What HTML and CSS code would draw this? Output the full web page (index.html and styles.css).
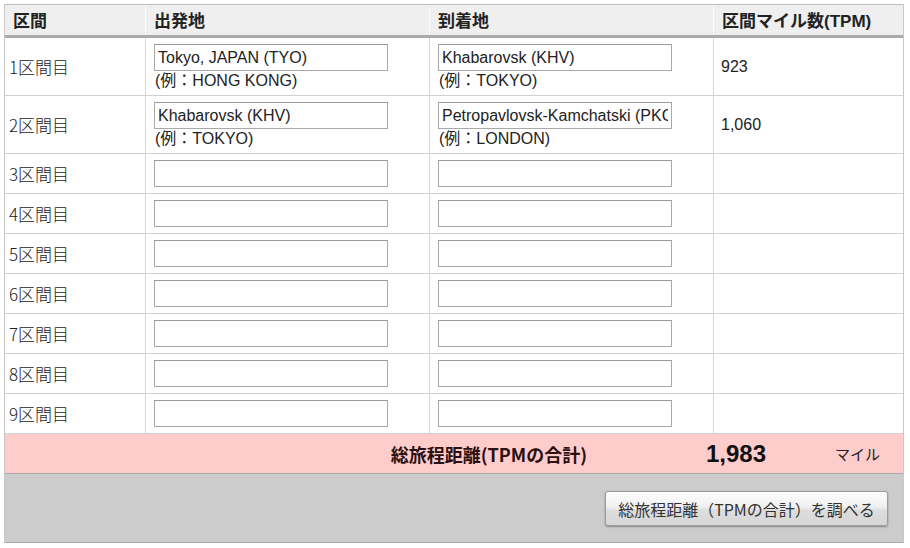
FILE: index.html
```html
<!DOCTYPE html>
<html lang="ja">
<head>
<meta charset="utf-8">
<title>総旅程距離</title>
<link rel="stylesheet" href="styles.css">
</head>
<body>
<div class="calc">
  <div class="row head">
    <div class="cell">区間</div>
    <div class="cell">出発地</div>
    <div class="cell">到着地</div>
    <div class="cell">区間マイル数(TPM)</div>
  </div>

  <div class="row tall">
    <div class="cell label">1区間目</div>
    <div class="cell field"><input class="box" type="text" value="Tokyo, JAPAN (TYO)"><span class="hint">(例：HONG KONG)</span></div>
    <div class="cell field"><input class="box" type="text" value="Khabarovsk (KHV)"><span class="hint">(例：TOKYO)</span></div>
    <div class="cell tpm">923</div>
  </div>

  <div class="row tall">
    <div class="cell label">2区間目</div>
    <div class="cell field"><input class="box" type="text" value="Khabarovsk (KHV)"><span class="hint">(例：TOKYO)</span></div>
    <div class="cell field"><input class="box" type="text" value="Petropavlovsk-Kamchatski (PKC)"><span class="hint">(例：LONDON)</span></div>
    <div class="cell tpm">1,060</div>
  </div>

  <div class="row">
    <div class="cell label">3区間目</div>
    <div class="cell field"><input class="box" type="text"></div>
    <div class="cell field"><input class="box" type="text"></div>
    <div class="cell tpm"></div>
  </div>
  <div class="row">
    <div class="cell label">4区間目</div>
    <div class="cell field"><input class="box" type="text"></div>
    <div class="cell field"><input class="box" type="text"></div>
    <div class="cell tpm"></div>
  </div>
  <div class="row">
    <div class="cell label">5区間目</div>
    <div class="cell field"><input class="box" type="text"></div>
    <div class="cell field"><input class="box" type="text"></div>
    <div class="cell tpm"></div>
  </div>
  <div class="row">
    <div class="cell label">6区間目</div>
    <div class="cell field"><input class="box" type="text"></div>
    <div class="cell field"><input class="box" type="text"></div>
    <div class="cell tpm"></div>
  </div>
  <div class="row">
    <div class="cell label">7区間目</div>
    <div class="cell field"><input class="box" type="text"></div>
    <div class="cell field"><input class="box" type="text"></div>
    <div class="cell tpm"></div>
  </div>
  <div class="row">
    <div class="cell label">8区間目</div>
    <div class="cell field"><input class="box" type="text"></div>
    <div class="cell field"><input class="box" type="text"></div>
    <div class="cell tpm"></div>
  </div>
  <div class="row">
    <div class="cell label">9区間目</div>
    <div class="cell field"><input class="box" type="text"></div>
    <div class="cell field"><input class="box" type="text"></div>
    <div class="cell tpm"></div>
  </div>

  <div class="total">
    <div class="total-label">総旅程距離(TPMの合計)</div>
    <div class="total-num">1,983</div>
    <div class="total-unit">マイル</div>
  </div>

  <div class="footer">
    <button class="calc-btn" type="button">総旅程距離（TPMの合計）を調べる</button>
  </div>
</div>
</body>
</html>
```

FILE: styles.css
```css
* { box-sizing: border-box; }

html, body {
  margin: 0;
  padding: 0;
  background: #ffffff;
}

body {
  padding: 4px;
  font-family: "Liberation Sans", "Noto Sans CJK JP", sans-serif;
  font-size: 16px;
  color: #222;
}

.calc {
  width: 900px;
  border-top: 1px solid #bcbcbc;
  border-left: 1px solid #c8c8c8;
  border-right: 1px solid #c8c8c8;
}

.row {
  display: grid;
  grid-template-columns: 141px 284px 284px 189px;
  height: 40px;
  border-bottom: 1px solid #d0d0d0;
}

.row.tall {
  height: 58px;
}

.cell {
  border-right: 1px solid #d6d6d6;
  display: flex;
  align-items: center;
  padding-left: 8px;
}

.cell:last-child {
  border-right: none;
}

.head {
  height: 33px;
  background: #efefef;
  border-bottom: 3px solid #aaaaaa;
}

.head .cell {
  font-weight: bold;
  font-size: 17px;
  color: #222;
  border-right-color: #fafafa;
  padding-left: 8px;
  padding-bottom: 1px;
}

.label {
  font-size: 17px;
  padding-left: 4px;
  font-family: "Noto Sans CJK JP", sans-serif;
  font-weight: 300;
}

.field {
  flex-direction: column;
  align-items: flex-start;
  justify-content: center;
  padding-left: 8px;
}

.tall .field {
  justify-content: flex-start;
  padding-top: 6px;
}

.box {
  width: 234px;
  height: 27px;
  margin: 0;
  border: 1px solid #a8a8a8;
  border-top-color: #9a9a9a;
  padding: 0 3px;
  font-family: "Liberation Sans", "Noto Sans CJK JP", sans-serif;
  font-size: 16px;
  color: #222;
  background: #fff;
  outline: none;
}

.hint {
  font-size: 16px;
  line-height: 20px;
  color: #222;
  padding-left: 1px;
}

.tpm {
  font-size: 16px;
  padding-left: 7px;
}

.total {
  display: grid;
  grid-template-columns: 596px 184px 118px;
  height: 40px;
  background: #ffcccc;
  border-bottom: 1px solid #a9a9a9;
  align-items: center;
}

.total-label {
  text-align: right;
  padding-right: 14px;
  font-family: "Noto Sans CJK JP", sans-serif;
  font-weight: bold;
  font-size: 18px;
  color: #2a1010;
}

.total-num {
  text-align: right;
  padding-right: 19px;
  font-weight: bold;
  font-size: 24px;
  color: #111;
}

.total-unit {
  padding-left: 50px;
  font-family: "Noto Sans CJK JP", sans-serif;
  font-size: 15px;
  color: #222;
}

.footer {
  display: flex;
  justify-content: flex-end;
  align-items: flex-start;
  height: 69px;
  background: #cccccc;
  border-bottom: 1px solid #a9a9a9;
  padding: 17px 15px 0 0;
}

.calc-btn {
  width: 283px;
  height: 35px;
  border: 1px solid #9c9c9c;
  border-radius: 3px;
  background: linear-gradient(#fefefe 0%, #f0f0f0 45%, #dedede 55%, #d6d6d6 100%);
  box-shadow: 0 1px 2px rgba(0, 0, 0, 0.35);
  font-family: "Noto Sans CJK JP", sans-serif;
  font-size: 16px;
  color: #333;
  padding: 0;
  cursor: pointer;
}
```
